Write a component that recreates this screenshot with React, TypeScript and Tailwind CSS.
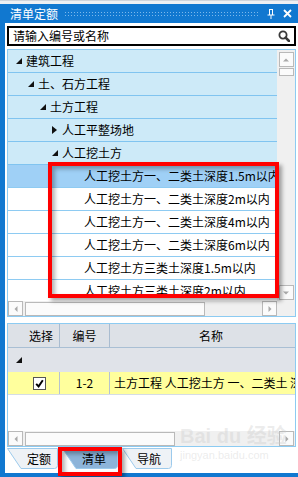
import React from "react";

type Dir = "up" | "down" | "left" | "right";

const arrowPts: Record<Dir, string> = {
  up: "2,6.5 5,3.5 8,6.5",
  down: "2,3.5 5,6.5 8,3.5",
  left: "6.5,2 3.5,5 6.5,8",
  right: "3.5,2 6.5,5 3.5,8",
};

function ScrollBtn({ dir }: { dir: Dir }) {
  return (
    <div className="w-[15px] h-[15px] shrink-0 border border-[#b9b9b9] bg-[#fbfbfb] flex items-center justify-center">
      <svg width="10" height="10" viewBox="0 0 10 10">
        <polygon points={arrowPts[dir]} fill="#a9a9a9" />
      </svg>
    </div>
  );
}

function Tri({ open }: { open: boolean }) {
  if (open)
    return (
      <svg width="6" height="6" viewBox="0 0 6 6" className="shrink-0">
        <polygon points="6,0 6,6 0,6" fill="#111" />
      </svg>
    );
  return (
    <svg width="5" height="8" viewBox="0 0 5 8" className="shrink-0">
      <polygon points="0,0 5,4 0,8" fill="#111" />
    </svg>
  );
}

const branches = [
  { level: 0, label: "建筑工程", open: true },
  { level: 1, label: "土、石方工程", open: true },
  { level: 2, label: "土方工程", open: true },
  { level: 3, label: "人工平整场地", open: false },
  { level: 3, label: "人工挖土方", open: true },
];

const leaves = [
  "人工挖土方一、二类土深度1.5m以内",
  "人工挖土方一、二类土深度2m以内",
  "人工挖土方一、二类土深度4m以内",
  "人工挖土方一、二类土深度6m以内",
  "人工挖土方三类土深度1.5m以内",
  "人工挖土方三类土深度2m以内",
];

const indent = ["pl-[8px]", "pl-[20px]", "pl-[32px]", "pl-[44px]"];

function Tab({ label, w, active, textPad }: { label: string; w: number; active?: boolean; textPad: string }) {
  const d = `M0.5,0.5 H${w - 0.5} V17.5 Q${w - 0.5},20.5 ${w - 3.5},20.5 H14 Z`;
  return (
    <div className={`relative h-[21px] shrink-0 flex items-center ${textPad}`}>
      <svg className="absolute left-0 top-0" width={w} height={21} viewBox={`0 0 ${w} 21`}>
        <path d={d} fill={active ? "#8db4d9" : "#eef2f6"} stroke="#9ccaec" />
      </svg>
      <span className="relative leading-none">{label}</span>
    </div>
  );
}

export default function App() {
  return (
    <div className="relative w-[298px] h-[477px] overflow-hidden bg-white flex flex-col font-['Noto_Sans_CJK_SC',sans-serif] text-[12px] text-black">
      {/* top strip */}
      <div className="h-[4px] bg-[#eef0f3] border-t border-[#cfd4db]" />

      {/* title bar */}
      <div className="h-[19px] bg-[#1178d0] flex items-center pl-[10px]">
        <span className="w-[48px] text-white text-[12px] leading-none">清单定额</span>
        <div className="ml-[6px] w-[194px] h-[6px] bg-[radial-gradient(circle,#7cb8ec_0.7px,transparent_1px)] bg-[length:3px_3px]" />
        <svg className="ml-[9px]" width="8" height="10" viewBox="0 0 8 10">
          <path d="M2.5 0.5 V6 M5.5 0.5 V6 M2 0.5 H6 M0.5 6 H7.5 M4 6 V10" stroke="#fff" strokeWidth="1" fill="none" />
        </svg>
        <svg className="ml-[8px]" width="9" height="9" viewBox="0 0 9 9">
          <path d="M1 1 L8 8 M8 1 L1 8" stroke="#fff" strokeWidth="1.8" />
        </svg>
      </div>

      {/* body */}
      <div className="flex-1 flex min-h-0">
        <div className="w-[5px] bg-[#1178d0]" />
        <div className="ml-[2px] w-[289px] flex flex-col pt-[3px]">
          {/* search */}
          <div className="h-[20px] border-2 border-black flex items-center pl-[4px] pr-[4px]">
            <span className="flex-1 leading-none">请输入编号或名称</span>
            <svg width="12" height="12" viewBox="0 0 12 12">
              <circle cx="5" cy="5" r="3.6" stroke="#3a3a3a" strokeWidth="1.8" fill="none" />
              <path d="M7.6 7.6 L11 11" stroke="#3a3a3a" strokeWidth="2.6" strokeLinecap="round" />
            </svg>
          </div>

          {/* tree panel */}
          <div className="mt-[3px] h-[268px] border border-[#8ccbf2] flex flex-col">
            <div className="h-[251px] flex">
              <div className="flex-1 overflow-hidden">
                {branches.map((b) => (
                  <div
                    key={b.label}
                    className={`h-[23px] bg-[#cdeaf8] border-b border-[#80c4f0] flex items-center whitespace-nowrap ${indent[b.level]}`}
                  >
                    <div className="w-[10px] flex items-center">
                      <Tri open={b.open} />
                    </div>
                    <span className="leading-none">{b.label}</span>
                  </div>
                ))}
                {leaves.map((l, i) => (
                  <div
                    key={l}
                    className={`h-[23px] border-b border-[#8ecbf2] flex items-center pl-[76px] whitespace-nowrap overflow-hidden ${
                      i === 0 ? "bg-[#9fd0f6]" : "bg-white"
                    }`}
                  >
                    <span className="leading-none">{l}</span>
                  </div>
                ))}
              </div>
              <div className="w-[18px] bg-[#f0f0f0] flex flex-col items-center">
                <div className="mt-[2px]">
                  <ScrollBtn dir="up" />
                </div>
                <div className="mt-[1px] w-[15px] h-[8px] border border-[#b9b9b9] bg-[#fbfbfb]" />
                <div className="flex-1" />
                <div className="mb-[1px]">
                  <ScrollBtn dir="down" />
                </div>
              </div>
            </div>
            <div className="h-[15px] bg-[#f0f0f0] flex items-center">
              <ScrollBtn dir="left" />
              <div className="ml-[2px] w-[180px] h-[14px] border border-[#b9b9b9] bg-[#fbfbfb]" />
              <div className="flex-1" />
              <ScrollBtn dir="right" />
              <div className="w-[18px]" />
            </div>
          </div>

          {/* grid panel */}
          <div className="mt-[6px] h-[124px] border border-[#8ccbf2] flex flex-col overflow-hidden">
            <div className="h-[24px] bg-[#dde1e7] border-b border-[#a9bfd4] flex">
              <div className="w-[52px] shrink-0 border-r border-[#a9bcd0] flex items-center justify-end pr-[6px]">选择</div>
              <div className="w-[50px] shrink-0 border-r border-[#a9bcd0] flex items-center justify-center">编号</div>
              <div className="w-[202px] shrink-0 flex items-center justify-center">名称</div>
            </div>
            <div className="h-[24px] bg-[#e0e3e9] flex items-center pl-[8px]">
              <Tri open />
            </div>
            <div className="h-[23px] bg-[#ffff9d] border-b border-[#d5dde5] flex">
              <div className="w-[52px] shrink-0 border-r border-[#b6c3cf] flex items-center pl-[25px]">
                <div className="w-[13px] h-[13px] border border-[#555] bg-white flex items-center justify-center">
                  <svg width="9" height="9" viewBox="0 0 9 9">
                    <path d="M1.2 4.8 L3.6 7.4 L7.8 1.2" stroke="#000" strokeWidth="1.9" fill="none" />
                  </svg>
                </div>
              </div>
              <div className="w-[50px] shrink-0 border-r border-[#b6c3cf] flex items-center justify-center">1-2</div>
              <div className="w-[202px] shrink-0 flex items-center pl-[4px] whitespace-nowrap overflow-hidden">
                土方工程 人工挖土方 一、二类土 深度1.5m以内
              </div>
            </div>
            <div className="flex-1" />
            <div className="h-[15px] bg-[#f0f0f0] flex items-center">
              <ScrollBtn dir="left" />
              <div className="ml-[2px] w-[150px] h-[14px] border border-[#b9b9b9] bg-[#fbfbfb]" />
              <div className="flex-1" />
              <div className="mr-[1px]">
                <ScrollBtn dir="right" />
              </div>
            </div>
          </div>

          {/* tabs */}
          <div className="mt-[1px] flex gap-[4px]">
            <div className="w-[51px]">
              <Tab label="定额" w={51} textPad="pl-[20px]" />
            </div>
            <div className="w-[56px]">
              <Tab label="清单" w={56} active textPad="pl-[20px]" />
            </div>
            <div className="w-[50px]">
              <Tab label="导航" w={50} textPad="pl-[15px]" />
            </div>
          </div>
        </div>
      </div>
      <div className="h-[4px] bg-[#1178d0]" />

      {/* watermark */}
      <div className="absolute left-[180px] top-[426px] pointer-events-none text-[rgba(200,200,200,0.35)] leading-none">
        <div className="text-[20px] font-bold font-['Liberation_Sans','Noto_Sans_CJK_SC',sans-serif]">Bai du 经验</div>
        <div className="mt-[4px] text-[11px] font-['Liberation_Sans',sans-serif]">jingyan.baidu.com</div>
      </div>

      {/* annotation boxes */}
      <div className="absolute left-[48px] top-[162px] w-[231px] h-[136px] border-4 border-[#ff0000] shadow-[3px_3px_4px_rgba(0,0,0,0.35),inset_3px_3px_4px_rgba(0,0,0,0.3)] pointer-events-none" />
      <div className="absolute left-[58px] top-[447px] w-[64px] h-[29px] border-4 border-[#ff0000] shadow-[3px_3px_4px_rgba(0,0,0,0.35),inset_3px_3px_4px_rgba(0,0,0,0.3)] pointer-events-none" />
    </div>
  );
}
